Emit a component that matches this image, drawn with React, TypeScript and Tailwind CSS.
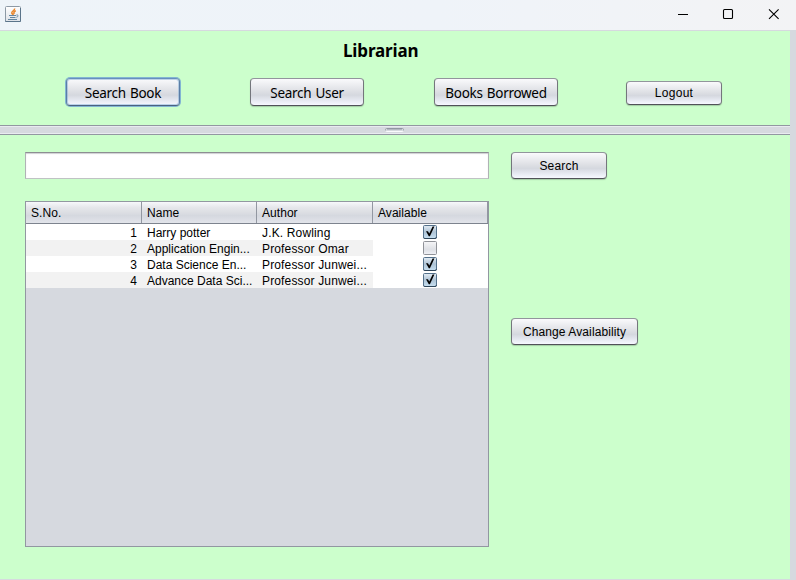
import type { ReactNode } from 'react';

const face =
  "flex shrink-0 items-center justify-center whitespace-pre rounded-[4px] border text-black bg-[linear-gradient(#fafafc_0%,#e8e9ed_30%,#dcdee3_50%,#d5d8df_62%,#e6e9f1_82%,#f6f8ff_100%)]";

const plain =
  "border-t-[#92959c] border-x-[#74767c] border-b-[#505258] shadow-[0_1px_1px_rgba(90,110,95,0.35)]";

const focused =
  "border-t-[#688fbd] border-x-[#5b7da6] border-b-[#4a6281] shadow-[0_0_0_1px_#82b5d3,inset_0_0_0_1px_rgba(115,164,209,0.45)]";

const small = "font-['Liberation_Sans',Arial,sans-serif] text-[12px]";
const large = "pt-[2px] font-['Noto_Sans','Open_Sans',sans-serif] text-[13.5px] tracking-[-0.3px] [word-spacing:1px]";

function Button({ className, focus = false, children }: { className: string; focus?: boolean; children: ReactNode }) {
  return <button className={`${face} ${focus ? focused : plain} ${className}`}>{children}</button>;
}

function JavaIcon() {
  return (
    <svg width="16" height="16" viewBox="0 0 16 16" className="ml-[5px] mt-[6px]">
      <defs>
        <linearGradient id="cup" x1="0" y1="0" x2="0" y2="1">
          <stop offset="0" stopColor="#ffffff" />
          <stop offset="1" stopColor="#dde2e8" />
        </linearGradient>
      </defs>
      <rect x="0.5" y="0.5" width="15" height="15" rx="1" fill="url(#cup)" stroke="#8c99a5" />
      <path d="M0.5 14.5V15.5H15.5V2" fill="none" stroke="#5a748a" />
      <path d="M9.6 2.5C10 4.5 6.5 5 6.8 7C7 8 8 8.2 8.2 9M10.8 4.8C8.6 5.6 8.6 7 9.3 8" fill="none" stroke="#e9852a" strokeWidth="1.5" />
      <path d="M4 9.5H11M5 11.5H10.5M3 13.5H12M11.4 9C13.8 8.6 13.6 10.8 11.4 11.2" fill="none" stroke="#6486a0" strokeWidth="1" />
    </svg>
  );
}

function CheckBox({ checked }: { checked: boolean }) {
  return (
    <svg width="14" height="14" viewBox="0 0 14 14">
      <defs>
        <linearGradient id="on" x1="0" y1="0" x2="0" y2="1">
          <stop offset="0" stopColor="#e4edf5" />
          <stop offset="0.5" stopColor="#aec3d5" />
          <stop offset="1" stopColor="#c7e0f2" />
        </linearGradient>
        <linearGradient id="off" x1="0" y1="0" x2="0" y2="1">
          <stop offset="0" stopColor="#f6f6f8" />
          <stop offset="0.6" stopColor="#dee0e5" />
          <stop offset="1" stopColor="#f0f1f6" />
        </linearGradient>
      </defs>
      <rect x="0.5" y="0.5" width="13" height="13" rx="1" fill={checked ? 'url(#on)' : 'url(#off)'} stroke={checked ? '#54718b' : '#909298'} />
      {checked && <path d="M0.7 12.5Q0.9 13.5 2 13.5H12Q13.3 13.5 13.4 12" fill="none" stroke="#2f465a" />}
      {checked && <path d="M3 6.2H4.9L6.3 8.4L9.6 1.6H11.4L6.9 11.2H5.8Z" fill="#000" />}
    </svg>
  );
}

const rows = [
  { name: 'Harry potter', author: 'J.K. Rowling', available: true },
  { name: 'Application Engin...', author: 'Professor Omar', available: false },
  { name: 'Data Science En...', author: 'Professor Junwei...', available: true },
  { name: 'Advance Data Sci...', author: 'Professor Junwei...', available: true },
];

const columns = 'grid grid-cols-[116px_115px_116px_115px]';

export default function App() {
  return (
    <div className="flex h-[580px] w-[796px] flex-col overflow-hidden bg-[#d6d9df] text-black">
      <header className="flex h-[30px] shrink-0 justify-between bg-[linear-gradient(90deg,#eef4f9,#eff3f9_55%,#f3f3f5)]">
        <JavaIcon />
        <svg width="120" height="30" viewBox="676 0 120 30" fill="none" stroke="#000">
          <path d="M678 14.5H688" />
          <rect x="723.5" y="9.5" width="9" height="9" rx="1" strokeWidth="1.1" />
          <path d="M769 9.3L778.6 18.9M778.6 9.3L769 18.9" strokeWidth="1.1" />
        </svg>
      </header>

      <div className="mt-px flex h-[548px] w-[790px] shrink-0 flex-col">
        <section className="flex h-[94px] shrink-0 flex-col bg-[#ccffcc]">
          <h1 className="ml-[343px] mt-[8px] h-[24px] font-['Noto_Sans','Open_Sans',sans-serif] text-[17px] font-bold leading-[24px] tracking-[-0.15px]">
            Librarian
          </h1>
          <div className="mt-[15px] flex h-[28px] items-center">
            <Button focus className={`${large} ml-[66px] h-[28px] w-[114px]`}>Search Book</Button>
            <Button className={`${large} ml-[70px] h-[28px] w-[114px]`}>Search User</Button>
            <Button className={`${large} ml-[70px] h-[28px] w-[124px]`}>Books Borrowed</Button>
            <Button className={`${small} ml-[68px] mt-[2px] h-[24px] w-[96px] tracking-[0.3px]`}>Logout</Button>
          </div>
        </section>

        <div className="flex h-[10px] shrink-0 items-center justify-center border-y border-[#9297a1] bg-[#d6d9df] shadow-[inset_0_1px_#e9ebf0,inset_0_-1px_#e9ebf0]">
          <svg width="20" height="4" viewBox="0 0 20 4">
            <rect x="0.5" y="0.5" width="18" height="3" rx="1.2" fill="#d6d9df" stroke="#f9fafc" />
            <path d="M0.5 2.5V1.5Q0.5 0.5 1.5 0.5H17.5Q18.5 0.5 18.5 1.5V2.5" fill="none" stroke="#9197a2" />
            <path d="M2 1.5H17" stroke="#b4b8c1" />
          </svg>
        </div>

        <section className={`${small} flex min-h-0 flex-1 items-start bg-[#ccffcc] pl-[25px] pt-[17px]`}>
          <div className="flex w-[464px] flex-col gap-[22px]">
            <input className="h-[27px] w-[464px] border border-t-[#8d8e92] border-x-[#b0b2b5] border-b-[#c0c2c4] bg-white px-1 shadow-[inset_0_1px_1px_#cfd0d3] outline-none" />
            <div className="flex h-[346px] flex-col border border-[#9297a1] bg-[#d6d9df]">
              <div className={`${columns} h-[22px] shrink-0 border-b border-[#7d838e] bg-[linear-gradient(#f7f8fb_0%,#e6e7eb_25%,#dcdee3_50%,#d5d8df_65%,#e2e4ea_100%)]`}>
                {['S.No.', 'Name', 'Author', 'Available'].map((title) => (
                  <div key={title} className="h-[21px] border-r border-[#9297a1] pl-[5px] leading-[22px] tracking-[0.05px]">{title}</div>
                ))}
              </div>
              {rows.map((row, i) => (
                <div key={i} className={`${columns} h-[16px] shrink-0 grid-rows-[16px] whitespace-nowrap leading-[18px] ${i % 2 ? 'bg-[#f2f2f2]' : 'bg-white'}`}>
                  <div className="pr-[5px] text-right">{i + 1}</div>
                  <div className="pl-[5px]">{row.name}</div>
                  <div className="pl-[5px] tracking-[0.15px]">{row.author}</div>
                  <div className="flex h-[16px] items-center justify-center bg-white pr-px">
                    <CheckBox checked={row.available} />
                  </div>
                </div>
              ))}
            </div>
          </div>
          <div className="ml-[22px] flex flex-col items-start">
            <Button className="h-[27px] w-[96px] tracking-[0.2px]">Search</Button>
            <Button className="mt-[139px] h-[27px] w-[127px] tracking-[0.1px]">Change Availability</Button>
          </div>
        </section>
      </div>
    </div>
  );
}
